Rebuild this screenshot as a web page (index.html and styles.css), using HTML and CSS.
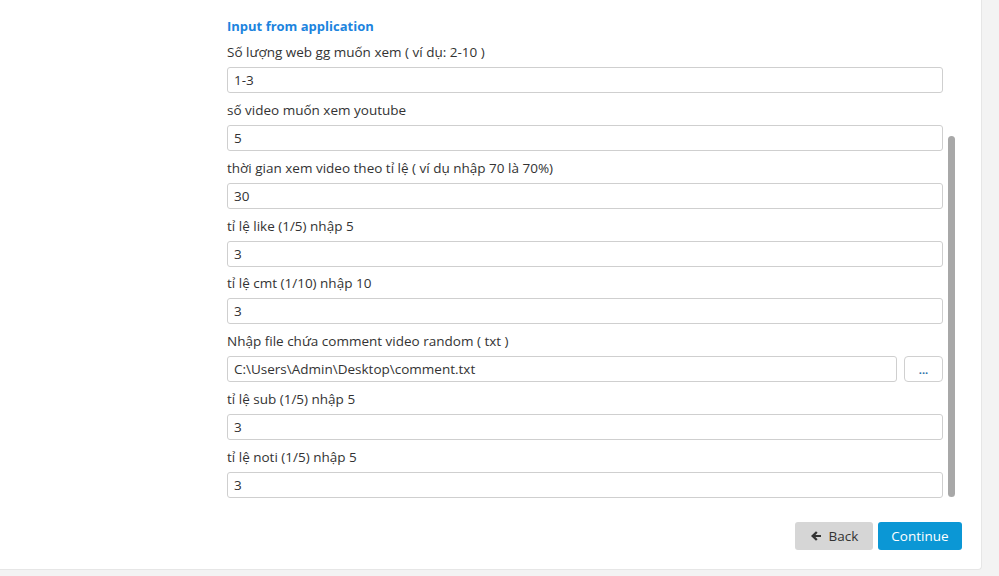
FILE: index.html
```html
<!DOCTYPE html>
<html lang="vi">
<head>
<meta charset="utf-8">
<title>Input from application</title>
<link rel="stylesheet" href="styles.css">
</head>
<body>
<div class="card">
  <div class="form">
    <div class="title">Input from application</div>
    <div class="field">
      <label class="label">Số lượng web gg muốn xem ( ví dụ: 2-10 )</label>
      <input class="input" type="text" value="1-3">
    </div>
    <div class="field">
      <label class="label">số video muốn xem youtube</label>
      <input class="input" type="text" value="5">
    </div>
    <div class="field">
      <label class="label">thời gian xem video theo tỉ lệ ( ví dụ nhập 70 là 70%)</label>
      <input class="input" type="text" value="30">
    </div>
    <div class="field">
      <label class="label">tỉ lệ like (1/5) nhập 5</label>
      <input class="input" type="text" value="3">
    </div>
    <div class="field">
      <label class="label">tỉ lệ cmt (1/10) nhập 10</label>
      <input class="input" type="text" value="3">
    </div>
    <div class="field">
      <label class="label">Nhập file chứa comment video random ( txt )</label>
      <div class="file-row">
        <input class="input" type="text" value="C:\Users\Admin\Desktop\comment.txt">
        <button class="browse">...</button>
      </div>
    </div>
    <div class="field">
      <label class="label">tỉ lệ sub (1/5) nhập 5</label>
      <input class="input" type="text" value="3">
    </div>
    <div class="field">
      <label class="label">tỉ lệ noti (1/5) nhập 5</label>
      <input class="input" type="text" value="3">
    </div>
    <div class="actions">
      <button class="btn btn-back"><svg class="arrow" viewBox="0 0 12 12" width="12" height="12"><path d="M1 6 L6 1.2 L7.6 2.8 L5.4 5 H11 V7 H5.4 L7.6 9.2 L6 10.8 Z" fill="#333"/></svg>Back</button>
      <button class="btn btn-continue">Continue</button>
    </div>
  </div>
  <div class="thumb"></div>
</div>
</body>
</html>
```
FILE: styles.css
```css
html, body {
  margin: 0;
  padding: 0;
}
body {
  background: #f3f3f3;
  width: 999px;
  height: 576px;
  overflow: hidden;
  font-family: "Open Sans", "Noto Sans", sans-serif;
  font-size: 13.5px;
  color: #333;
}
.card {
  position: relative;
  width: 981px;
  height: 569px;
  background: #fff;
  border-right: 1px solid #e6e6e6;
  border-bottom: 1px solid #e6e6e6;
  border-bottom-right-radius: 4px;
  box-sizing: content-box;
}
.form {
  margin-left: 227px;
  width: 716px;
  padding-top: 17px;
  display: flex;
  flex-direction: column;
}
.title {
  color: #1c84de;
  font-weight: 700;
  font-size: 13px;
  line-height: 18px;
  margin-bottom: 8px;
}
.field {
  display: flex;
  flex-direction: column;
  margin-bottom: 7.86px;
}
.label {
  line-height: 18px;
  margin-bottom: 6px;
}
.input {
  box-sizing: border-box;
  height: 26px;
  width: 100%;
  border: 1px solid #cfcfcf;
  border-radius: 3px;
  padding: 0 6px;
  font-family: inherit;
  font-size: 13.5px;
  color: #333;
  background: #fff;
  outline: none;
}
.file-row {
  display: flex;
  gap: 7px;
}
.file-row .input {
  flex: 1;
}
.browse {
  box-sizing: border-box;
  width: 39px;
  height: 26px;
  flex: none;
  border: 1px solid #d0d0d0;
  border-radius: 4px;
  background: #fff;
  color: #2b6fa8;
  font-family: inherit;
  font-size: 11px;
  font-weight: 700;
  padding: 0;
  line-height: 1;
}
.actions {
  display: flex;
  justify-content: flex-end;
  gap: 5px;
  margin-top: 16.2px;
  margin-right: -19px;
}
.btn {
  box-sizing: border-box;
  height: 28px;
  border: none;
  border-radius: 3px;
  font-family: inherit;
  font-size: 13.5px;
  padding: 0;
  display: flex;
  align-items: center;
  justify-content: center;
}
.btn-back {
  width: 78px;
  background: #d6d6d6;
  color: #333;
  gap: 7px;
}
.btn-continue {
  width: 84px;
  background: #0b97d5;
  color: #fff;
}
.arrow {
  display: block;
}
.thumb {
  position: absolute;
  left: 948px;
  top: 136px;
  width: 7px;
  height: 361px;
  border-radius: 4px;
  background: #a8a8a8;
}
```
